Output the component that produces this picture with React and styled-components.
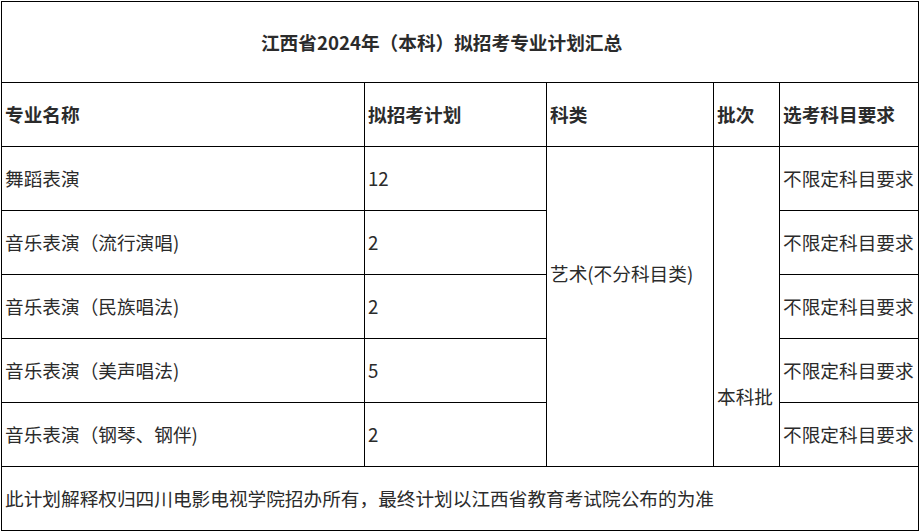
import styled, { createGlobalStyle } from "styled-components";

const GlobalStyle = createGlobalStyle`
  body {
    margin: 1px;
    background: #fff;
    font-family: "Noto Sans CJK SC", "Noto Sans", sans-serif;
    color: #2b2b2b;
  }
`;

const Table = styled.table`
  width: 917px;
  table-layout: fixed;
  border-collapse: collapse;
  font-size: 14pt;
`;

const Row = styled.tr`
  height: ${(p) => p.h || 64}px;
`;

const Cell = styled.td`
  border: 1px solid #000;
  padding: 0 3px;
  text-align: left;
  vertical-align: middle;
  font-weight: ${(p) => (p.bold ? 700 : 400)};
  white-space: nowrap;
  overflow: hidden;
  line-height: 1.4;
`;

const TitleCell = styled(Cell)`
  text-align: center;
  padding-right: 40px;
`;

const SpanCell = styled(Cell)`
  vertical-align: top;
  padding-top: ${(p) => p.top}px;
`;

const majors = [
  ["舞蹈表演", "12"],
  ["音乐表演（流行演唱)", "2"],
  ["音乐表演（民族唱法)", "2"],
  ["音乐表演（美声唱法)", "5"],
  ["音乐表演（钢琴、钢伴)", "2"],
];

export default function App() {
  return (
    <>
      <GlobalStyle />
      <Table>
        <colgroup>
          <col style={{ width: 363 }} />
          <col style={{ width: 182 }} />
          <col style={{ width: 167 }} />
          <col style={{ width: 66 }} />
          <col style={{ width: 139 }} />
        </colgroup>
        <tbody>
          <Row h={81}>
            <TitleCell colSpan={5} bold>
              江西省2024年（本科）拟招考专业计划汇总
            </TitleCell>
          </Row>
          <Row>
            <Cell bold>专业名称</Cell>
            <Cell bold>拟招考计划</Cell>
            <Cell bold>科类</Cell>
            <Cell bold>批次</Cell>
            <Cell bold>选考科目要求</Cell>
          </Row>
          {majors.map(([name, plan], i) => (
            <Row key={name}>
              <Cell>{name}</Cell>
              <Cell>{plan}</Cell>
              {i === 0 && (
                <>
                  <SpanCell rowSpan={5} top={113}>
                    艺术(不分科目类)
                  </SpanCell>
                  <SpanCell rowSpan={5} top={236}>
                    本科批
                  </SpanCell>
                </>
              )}
              <Cell>不限定科目要求</Cell>
            </Row>
          ))}
          <Row>
            <Cell colSpan={5}>
              此计划解释权归四川电影电视学院招办所有，最终计划以江西省教育考试院公布的为准
            </Cell>
          </Row>
        </tbody>
      </Table>
    </>
  );
}
